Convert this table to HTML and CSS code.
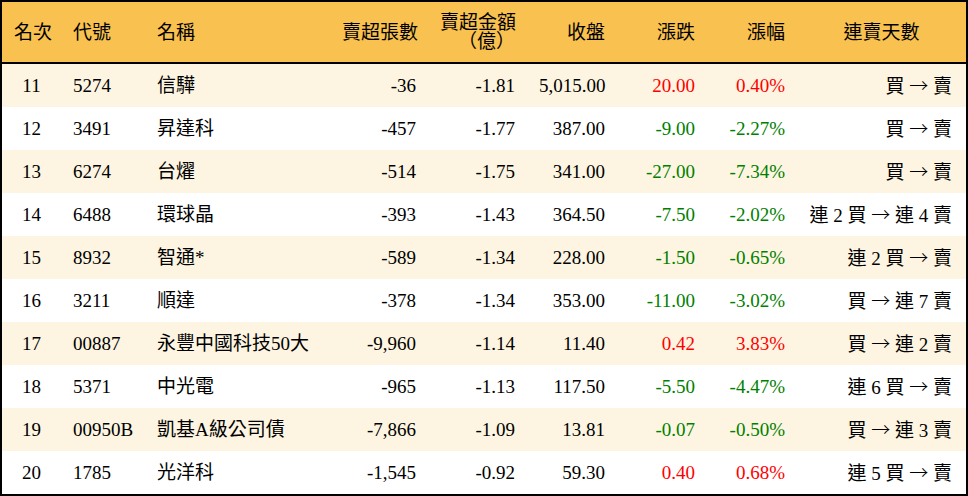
FILE: index.html
```html
<!DOCTYPE html>
<html lang="zh-Hant">
<head>
<meta charset="utf-8">
<title>賣超排行</title>
<link rel="stylesheet" href="styles.css">
</head>
<body>
<table class="rank">
  <colgroup>
    <col class="c-rank"><col class="c-code"><col class="c-name"><col class="c-vol"><col class="c-amt"><col class="c-close"><col class="c-chg"><col class="c-pct"><col class="c-days">
  </colgroup>
  <thead>
    <tr>
      <th class="center">名次</th>
      <th class="left">代號</th>
      <th class="left">名稱</th>
      <th class="right">賣超張數</th>
      <th class="right">賣超金額<br>（億）</th>
      <th class="right">收盤</th>
      <th class="right">漲跌</th>
      <th class="right">漲幅</th>
      <th class="center">連賣天數</th>
    </tr>
  </thead>
  <tbody>
    <tr class="odd"><td class="center">11</td><td class="left">5274</td><td class="left">信驊</td><td class="right">-36</td><td class="right">-1.81</td><td class="right">5,015.00</td><td class="right up">20.00</td><td class="right up">0.40%</td><td class="right days">買 <span class="arrow">→</span> 賣</td></tr>
    <tr><td class="center">12</td><td class="left">3491</td><td class="left">昇達科</td><td class="right">-457</td><td class="right">-1.77</td><td class="right">387.00</td><td class="right down">-9.00</td><td class="right down">-2.27%</td><td class="right days">買 <span class="arrow">→</span> 賣</td></tr>
    <tr class="odd"><td class="center">13</td><td class="left">6274</td><td class="left">台燿</td><td class="right">-514</td><td class="right">-1.75</td><td class="right">341.00</td><td class="right down">-27.00</td><td class="right down">-7.34%</td><td class="right days">買 <span class="arrow">→</span> 賣</td></tr>
    <tr><td class="center">14</td><td class="left">6488</td><td class="left">環球晶</td><td class="right">-393</td><td class="right">-1.43</td><td class="right">364.50</td><td class="right down">-7.50</td><td class="right down">-2.02%</td><td class="right days">連 2 買 <span class="arrow">→</span> 連 4 賣</td></tr>
    <tr class="odd"><td class="center">15</td><td class="left">8932</td><td class="left">智通*</td><td class="right">-589</td><td class="right">-1.34</td><td class="right">228.00</td><td class="right down">-1.50</td><td class="right down">-0.65%</td><td class="right days">連 2 買 <span class="arrow">→</span> 賣</td></tr>
    <tr><td class="center">16</td><td class="left">3211</td><td class="left">順達</td><td class="right">-378</td><td class="right">-1.34</td><td class="right">353.00</td><td class="right down">-11.00</td><td class="right down">-3.02%</td><td class="right days">買 <span class="arrow">→</span> 連 7 賣</td></tr>
    <tr class="odd"><td class="center">17</td><td class="left">00887</td><td class="left">永豐中國科技50大</td><td class="right">-9,960</td><td class="right">-1.14</td><td class="right">11.40</td><td class="right up">0.42</td><td class="right up">3.83%</td><td class="right days">買 <span class="arrow">→</span> 連 2 賣</td></tr>
    <tr><td class="center">18</td><td class="left">5371</td><td class="left">中光電</td><td class="right">-965</td><td class="right">-1.13</td><td class="right">117.50</td><td class="right down">-5.50</td><td class="right down">-4.47%</td><td class="right days">連 6 買 <span class="arrow">→</span> 賣</td></tr>
    <tr class="odd"><td class="center">19</td><td class="left">00950B</td><td class="left">凱基A級公司債</td><td class="right">-7,866</td><td class="right">-1.09</td><td class="right">13.81</td><td class="right down">-0.07</td><td class="right down">-0.50%</td><td class="right days">買 <span class="arrow">→</span> 連 3 賣</td></tr>
    <tr><td class="center">20</td><td class="left">1785</td><td class="left">光洋科</td><td class="right">-1,545</td><td class="right">-0.92</td><td class="right">59.30</td><td class="right up">0.40</td><td class="right up">0.68%</td><td class="right days">連 5 買 <span class="arrow">→</span> 賣</td></tr>
  </tbody>
</table>
</body>
</html>
```

FILE: styles.css
```css
html, body {
  margin: 0;
  padding: 0;
  background: #ffffff;
}

.rank {
  width: 968px;
  border: 2px solid #000;
  border-collapse: separate;
  border-spacing: 0;
  table-layout: fixed;
  font-family: "Liberation Serif", "Noto Sans CJK TC", serif;
  font-size: 19px;
  color: #000;
}

.c-rank { width: 59px; }
.c-code { width: 84px; }
.c-name { width: 185px; }
.c-vol { width: 98px; }
.c-amt { width: 99px; }
.c-close { width: 90px; }
.c-chg { width: 90px; }
.c-pct { width: 90px; }
.c-days { width: 169px; }

.rank thead tr {
  height: 62px;
}

.rank th {
  background: #f8c150;
  font-weight: normal;
  line-height: 19px;
  padding: 0 12px;
  border-bottom: 2px solid #000;
  vertical-align: middle;
  white-space: nowrap;
}

.rank tbody tr {
  height: 43px;
}

.rank td {
  padding: 0 12px;
  line-height: 22px;
  vertical-align: middle;
  white-space: nowrap;
}

.rank tbody tr.odd td {
  background: #fdf5e1;
}

.left { text-align: left; }
.right { text-align: right; }
.center { text-align: center; }

.rank td.days {
  padding-right: 14px;
}

.arrow {
  font-family: "Noto Sans CJK TC", sans-serif;
  font-weight: 300;
}

.up { color: #ff0000; }
.down { color: #008000; }
```
